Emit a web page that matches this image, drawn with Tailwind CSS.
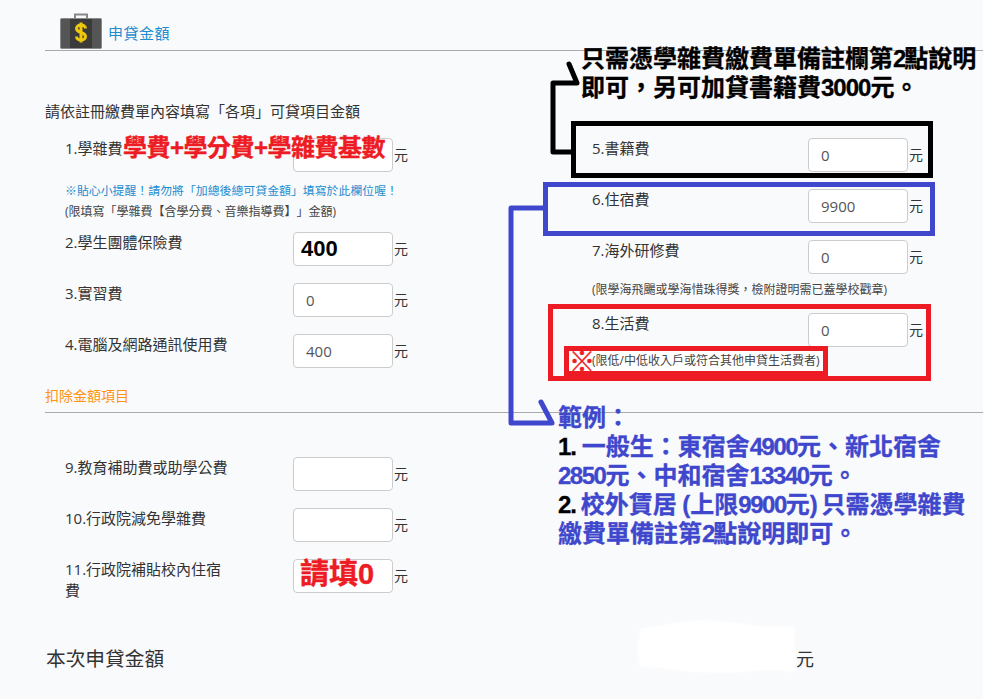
<!DOCTYPE html>
<html lang="zh-Hant">
<head>
  <meta charset="UTF-8">
  <title>申貸金額</title>
  <script src="https://cdn.jsdelivr.net/npm/@tailwindcss/browser@4"></script>
</head>
<body class="bg-[#f9fafc] text-[#333] text-[15px] [text-spacing-trim:space-all] font-['Open_Sans','Noto_Sans_CJK_TC',sans-serif]">
  <div class="relative w-[983px] h-[699px] overflow-hidden">

    <!-- header -->
    <div class="ml-[45px] h-[51px] border-b border-[#aaa] pl-[15px] flex items-end">
      <svg width="42" height="36" viewBox="0 0 42 36" class="mb-[1px]">
        <path d="M15 6V1.500h12V6" fill="none" stroke="#888" stroke-width="2"/>
        <rect x="0.500" y="5.500" width="41" height="30" rx="1" fill="#555" stroke="#8a8a8a"/>
        <rect x="10" y="6" width="22" height="29" fill="#3b3b3b"/>
        <path d="M25.500 15.500c0-2-2-3.500-4.500-3.500s-4.500 1.500-4.500 3.500c0 5 9 3 9 8 0 2-2 3.500-4.500 3.500s-4.500-1.500-4.500-3.500M21 9.500v20" fill="none" stroke="#edc80c" stroke-width="3"/>
      </svg>
      <span class="ml-[6px] mb-[7px] text-[#1e8ccf] tracking-[.5px] leading-5">申貸金額</span>
    </div>

    <p class="ml-[45px] mt-[50px] leading-5">請依註冊繳費單內容填寫「各項」可貸項目金額</p>

    <div class="flex mt-[17px]">
      <!-- left column -->
      <div class="w-[592px] pl-[65px] shrink-0">
        <div class="flex h-[34px]">
          <span class="w-[228px] leading-5">1.學雜費</span>
          <div class="w-[100px] h-[34px] bg-white border border-[#ccc] rounded"></div>
          <span class="ml-[1px] mt-[7px] leading-5 text-[14px]">元</span>
        </div>
        <p class="mt-[8px] text-[11.9px] leading-5 text-[#1e8ccf]">※貼心小提醒！請勿將「加總後總可貸金額」填寫於此欄位喔！</p>
        <p class="mt-[2px] text-xs leading-5 text-[#444]">(限填寫「學雜費【含學分費、音樂指導費】」金額)</p>
        <div class="flex h-[34px] mt-[10px]">
          <span class="w-[228px] leading-5">2.學生團體保險費</span>
          <div class="w-[100px] h-[34px] bg-white border border-[#ccc] rounded pl-[7px] text-[22px] leading-8 font-bold font-['Liberation_Sans'] text-black">400</div>
          <span class="ml-[1px] mt-[7px] leading-5 text-[14px]">元</span>
        </div>
        <div class="flex h-[34px] mt-[17px]">
          <span class="w-[228px] leading-5">3.實習費</span>
          <div class="w-[100px] h-[34px] bg-white border border-[#ccc] rounded pl-[12px] text-[15px] leading-8 text-[#555]">0</div>
          <span class="ml-[1px] mt-[7px] leading-5 text-[14px]">元</span>
        </div>
        <div class="flex h-[34px] mt-[17px]">
          <span class="w-[228px] leading-5">4.電腦及網路通訊使用費</span>
          <div class="w-[100px] h-[34px] bg-white border border-[#ccc] rounded pl-[12px] text-[15px] leading-8 text-[#555]">400</div>
          <span class="ml-[1px] mt-[7px] leading-5 text-[14px]">元</span>
        </div>
      </div>

      <!-- right column -->
      <div class="grow">
        <div class="flex h-[34px]">
          <span class="w-[216px] leading-5">5.書籍費</span>
          <div class="w-[100px] h-[34px] bg-white border border-[#ccc] rounded pl-[12px] text-[15px] leading-8 text-[#555]">0</div>
          <span class="ml-[1px] mt-[7px] leading-5 text-[14px]">元</span>
        </div>
        <div class="flex h-[34px] mt-[17px]">
          <span class="w-[216px] leading-5">6.住宿費</span>
          <div class="w-[100px] h-[34px] bg-white border border-[#ccc] rounded pl-[12px] text-[15px] leading-8 text-[#555]">9900</div>
          <span class="ml-[1px] mt-[7px] leading-5 text-[14px]">元</span>
        </div>
        <div class="flex h-[34px] mt-[17px]">
          <span class="w-[216px] leading-5">7.海外研修費</span>
          <div class="w-[100px] h-[34px] bg-white border border-[#ccc] rounded pl-[12px] text-[15px] leading-8 text-[#555]">0</div>
          <span class="ml-[1px] mt-[7px] leading-5 text-[14px]">元</span>
        </div>
        <p class="mt-[6px] text-xs leading-5 text-[#444]">(限學海飛颺或學海惜珠得獎，檢附證明需已蓋學校戳章)</p>
        <div class="flex h-[34px] mt-[13px]">
          <span class="w-[216px] leading-5">8.生活費</span>
          <div class="w-[100px] h-[34px] bg-white border border-[#ccc] rounded pl-[12px] text-[15px] leading-8 text-[#555]">0</div>
          <span class="ml-[1px] mt-[7px] leading-5 text-[14px]">元</span>
        </div>
      </div>
    </div>

    <!-- deductions -->
    <div class="ml-[45px] mt-[18px] h-[27px] border-b border-[#aaa] text-sm leading-5 text-[#ff9410]">扣除金額項目</div>

    <div class="pl-[65px] mt-[44px]">
      <div class="flex h-[34px]">
        <span class="w-[228px] leading-5">9.教育補助費或助學公費</span>
        <div class="w-[100px] h-[34px] bg-white border border-[#ccc] rounded"></div>
        <span class="ml-[1px] mt-[7px] leading-5 text-[14px]">元</span>
      </div>
      <div class="flex h-[34px] mt-[17px]">
        <span class="w-[228px] leading-5">10.行政院減免學雜費</span>
        <div class="w-[100px] h-[34px] bg-white border border-[#ccc] rounded"></div>
        <span class="ml-[1px] mt-[7px] leading-5 text-[14px]">元</span>
      </div>
      <div class="flex h-[34px] mt-[17px]">
        <span class="w-[228px] pr-[68px] leading-[21px]">11.行政院補貼校內住宿費</span>
        <div class="w-[100px] h-[34px] bg-white border border-[#ccc] rounded"></div>
        <span class="ml-[1px] mt-[7px] leading-5 text-[14px]">元</span>
      </div>
    </div>

    <div class="flex items-center ml-[46px] mt-[52px] text-[19.7px] leading-7">
      <span class="w-[750px]">本次申貸金額</span>
      <span class="text-[18px]">元</span>
    </div>

    <!-- annotations pasted over the form -->
    <svg class="absolute left-0 top-0 blur-[1px]" width="983" height="699">
      <path d="M640 629L680 622L700 620L730 622L760 626L794 626L796 672L770 670L730 673L690 672L660 668L640 667L637 650Z" fill="#fff"/>
    </svg>

    <p class="absolute left-[123px] top-[133px] text-[24px] leading-[29px] font-bold tracking-[-.5px] [-webkit-text-stroke:.4px] text-[#ed1c24] font-['Liberation_Sans','Noto_Sans_CJK_TC',sans-serif]">學費+學分費+學雜費基數</p>
    <p class="absolute left-[300px] top-[556px] text-[29px] leading-9 font-bold [-webkit-text-stroke:.4px] text-[#ed1c24] font-['Liberation_Sans','Noto_Sans_CJK_TC',sans-serif]">請填0</p>

    <div class="absolute left-[571px] top-[121px] w-[362px] h-[57px] border-[5px] border-black"></div>
    <div class="absolute left-[543px] top-[182px] w-[392px] h-[54px] border-[5px] border-[#3f48cc]"></div>
    <div class="absolute left-[548px] top-[304px] w-[383px] h-[77px] border-[5px] border-[#ed1c24]"></div>
    <div class="absolute left-[564px] top-[346px] w-[264px] h-[30px] border-[5px] border-[#ed1c24] bg-white flex items-center">
      <span class="w-[23px] text-center text-[26px] leading-5 font-bold [-webkit-text-stroke:.5px] text-[#ed1c24]">※</span>
      <span class="text-xs leading-5 text-[#444]">(限低/中低收入戶或符合其他申貸生活費者)</span>
    </div>

    <svg class="absolute left-0 top-0" width="983" height="699" fill="none" stroke-width="5" stroke-linecap="round" stroke-linejoin="round">
      <path d="M571 152H553V83H577L569 64" stroke="#000"/>
      <path d="M543 208H511V423H552L541 402" stroke="#3f48cc"/>
    </svg>

    <p class="absolute left-[581px] top-[44px] w-[400px] whitespace-nowrap text-[24px] leading-[29px] font-bold [-webkit-text-stroke:.3px] text-black font-['Liberation_Sans','Noto_Sans_CJK_TC',sans-serif]">只需憑學雜費繳費單備註欄第<span class="tracking-[-2px]">2</span>點說明<br>即可，另可加貸書籍費<span class="tracking-[-1px]">3000</span>元。</p>

    <div class="absolute left-[558px] top-[403px] w-[420px] whitespace-nowrap text-[24px] leading-[29px] font-bold [-webkit-text-stroke:.3px] text-[#3f48cc] font-['Liberation_Sans','Noto_Sans_CJK_TC',sans-serif]">
      <p>範例：</p>
      <p><span class="text-black tracking-[-1px]">1. </span>一般生：東宿舍<span class="tracking-[-1.500px]">4900</span>元、新北宿舍<br><span class="tracking-[-1.500px]">2850</span>元、中和宿舍<span class="tracking-[-1.500px]">13340</span>元。</p>
      <p class="[word-spacing:-1px]"><span class="text-black tracking-[-1px]">2. </span>校外賃居 (上限<span class="tracking-[-1.500px]">9900</span>元) <span class="ml-[-2px]">只需憑學雜費</span><br>繳費單備註第<span class="tracking-[-2px]">2</span>點說明即可。</p>
    </div>
  </div>
</body>
</html>
